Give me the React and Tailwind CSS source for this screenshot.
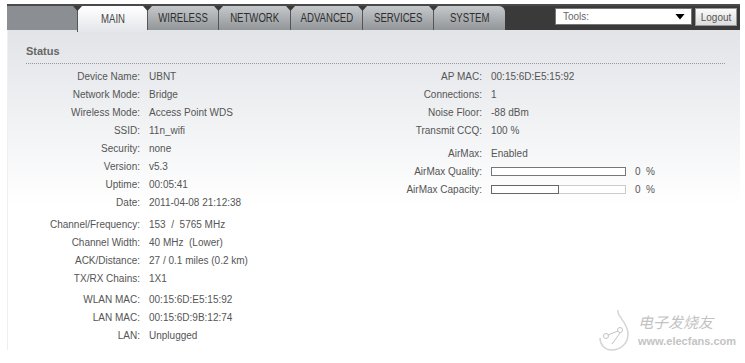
import React from 'react'

const leftRows = [
  [['Device Name', 'UBNT'], ['Network Mode', 'Bridge'], ['Wireless Mode', 'Access Point WDS'], ['SSID', '11n_wifi'], ['Security', 'none'], ['Version', 'v5.3'], ['Uptime', '00:05:41'], ['Date', '2011-04-08 21:12:38']],
  [['Channel/Frequency', '153  /  5765 MHz'], ['Channel Width', '40 MHz  (Lower)'], ['ACK/Distance', '27 / 0.1 miles (0.2 km)'], ['TX/RX Chains', '1X1']],
  [['WLAN MAC', '00:15:6D:E5:15:92'], ['LAN MAC', '00:15:6D:9B:12:74'], ['LAN', 'Unplugged']],
]

const rightRows = [['AP MAC', '00:15:6D:E5:15:92'], ['Connections', '1'], ['Noise Floor', '-88 dBm'], ['Transmit CCQ', '100 %']]

const tabs = [
  ['MAIN', 'w-[70px]'],
  ['WIRELESS', 'w-[71px]'],
  ['NETWORK', 'w-[72px]'],
  ['ADVANCED', 'w-[72px]'],
  ['SERVICES', 'w-[71px]'],
  ['SYSTEM', 'w-[72px]'],
]

const Row = ({ label, value, labelW }) => (
  <div className="flex h-[18px] items-center">
    <div className={`${labelW} shrink-0 text-right text-[#555]`}>{label}:</div>
    <div className="pl-[9px] whitespace-pre text-[#555]">{value}</div>
  </div>
)

const App = () => {
  return (
    <div className="w-[745px] h-[363px] bg-white overflow-hidden relative text-[10px] font-['Liberation_Sans',Arial,sans-serif]">
      {/* header */}
      <div className="pt-[4px] pl-[7px] pr-[5px] bg-white">
        <div className="flex h-[26px] border-t-2 border-[#4a4a4a] bg-[#3a3a3a]">
          <div className="w-[70px] h-[24px] shrink-0 bg-[#8b8f93]" />
          {tabs.map(([t, w], i) => (
            <div
              key={t}
              className={`${w} shrink-0 relative flex items-center justify-center border-l border-[#555] text-[12px] ${
                i === 0
                  ? 'h-[26px] bg-gradient-to-b from-white to-[#e4e6ea] text-[#444]'
                  : 'h-[24px] bg-gradient-to-b from-[#c6c9cc] to-[#939699] text-[#2e2e2e]'
              } ${i === tabs.length - 1 ? 'rounded-tr-[6px]' : ''}`}
            >
              <span className="absolute -left-[5px] top-0 w-[9px] h-[5px] bg-[#3a3a3a] [clip-path:polygon(0_0,100%_0,50%_100%)]" />
              <span className="inline-block scale-x-[0.8]">{t}</span>
            </div>
          ))}
          <div className="flex-1 h-[24px] bg-[#3a3a3a] flex items-start justify-end gap-[3px] pt-[2px] pr-[3px]">
            <div className="w-[137px] h-[17px] bg-white border border-[#777] flex items-center justify-between pl-[7px] pr-[6px] text-[#666]">
              <span>Tools:</span>
              <span className="w-[10px] h-[6px] bg-black [clip-path:polygon(0_0,100%_0,50%_100%)]" />
            </div>
            <div className="h-[18px] w-[42px] flex items-center justify-center bg-gradient-to-b from-[#fafafa] to-[#dcdcdc] border border-[#999] text-[#555]">
              Logout
            </div>
          </div>
        </div>
      </div>

      {/* panel */}
      <div className="ml-[7px] mr-[5px] h-[320px] bg-gradient-to-b from-[#e2e4e8] via-white via-55% to-white border-l border-[#eee]">
        <div className="pl-[18px] pr-[15px] pt-[13px]">
          <div className="font-bold text-[#666] text-[11px] pb-[3px] border-b border-dotted border-[#999]">Status</div>
        </div>
        <div className="flex pt-[4px]">
          <div className="w-[365px] flex flex-col">
            {leftRows.map((group, gi) => (
              <div key={gi} className={gi === 0 ? '' : gi === 1 ? 'mt-[4px]' : 'mt-[3px]'}>
                {group.map(([l, v]) => (
                  <Row key={l} label={l} value={v} labelW="w-[132px]" />
                ))}
              </div>
            ))}
          </div>
          <div className="flex flex-col">
            {rightRows.map(([l, v]) => (
              <Row key={l} label={l} value={v} labelW="w-[109px]" />
            ))}
            <div className="mt-[5px]">
              <Row label="AirMax" value="Enabled" labelW="w-[109px]" />
              <div className="flex h-[18px] items-center">
                <div className="w-[109px] text-right text-[#555]">AirMax Quality:</div>
                <div className="pl-[9px] flex items-center">
                  <div className="h-[9px] w-[135px] border border-[#777] bg-white" />
                  <span className="pl-[9px] text-[#555] whitespace-pre">0  %</span>
                </div>
              </div>
              <div className="flex h-[18px] items-center">
                <div className="w-[109px] text-right text-[#555]">AirMax Capacity:</div>
                <div className="pl-[9px] flex items-center">
                  <div className="flex h-[9px] w-[135px] border border-[#ccc] bg-white">
                    <div className="w-[68px] -my-px -ml-px h-[9px] border border-[#666]" />
                  </div>
                  <span className="pl-[9px] text-[#555] whitespace-pre">0  %</span>
                </div>
              </div>
            </div>
          </div>
        </div>
      </div>

      {/* watermark */}
      <div className="absolute left-[598px] top-[308px] flex items-center gap-[6px] opacity-70">
        <svg width="34" height="44" viewBox="0 0 34 44">
          <path d="M20 2 C 18 8, 30 14, 30 26 C 30 36, 22 42, 14 42 C 6 42, 2 36, 2 30" fill="none" stroke="#c4c4c4" strokeWidth="1.5" />
          <circle cx="8" cy="28" r="2.5" fill="none" stroke="#aaa" />
          <circle cx="22" cy="22" r="2.5" fill="none" stroke="#aaa" />
          <path d="M10 27 L20 23" stroke="#aaa" />
          <path d="M22 25 L14 36" stroke="#aaa" />
        </svg>
        <div className="flex flex-col gap-[7px] leading-none text-[#aaa]">
          <span className="text-[15px] italic font-['Noto_Sans_CJK_SC',sans-serif]">电子发烧友</span>
          <span className="text-[11px] font-bold">www.elecfans.com</span>
        </div>
      </div>
    </div>
  )
}

export default App
